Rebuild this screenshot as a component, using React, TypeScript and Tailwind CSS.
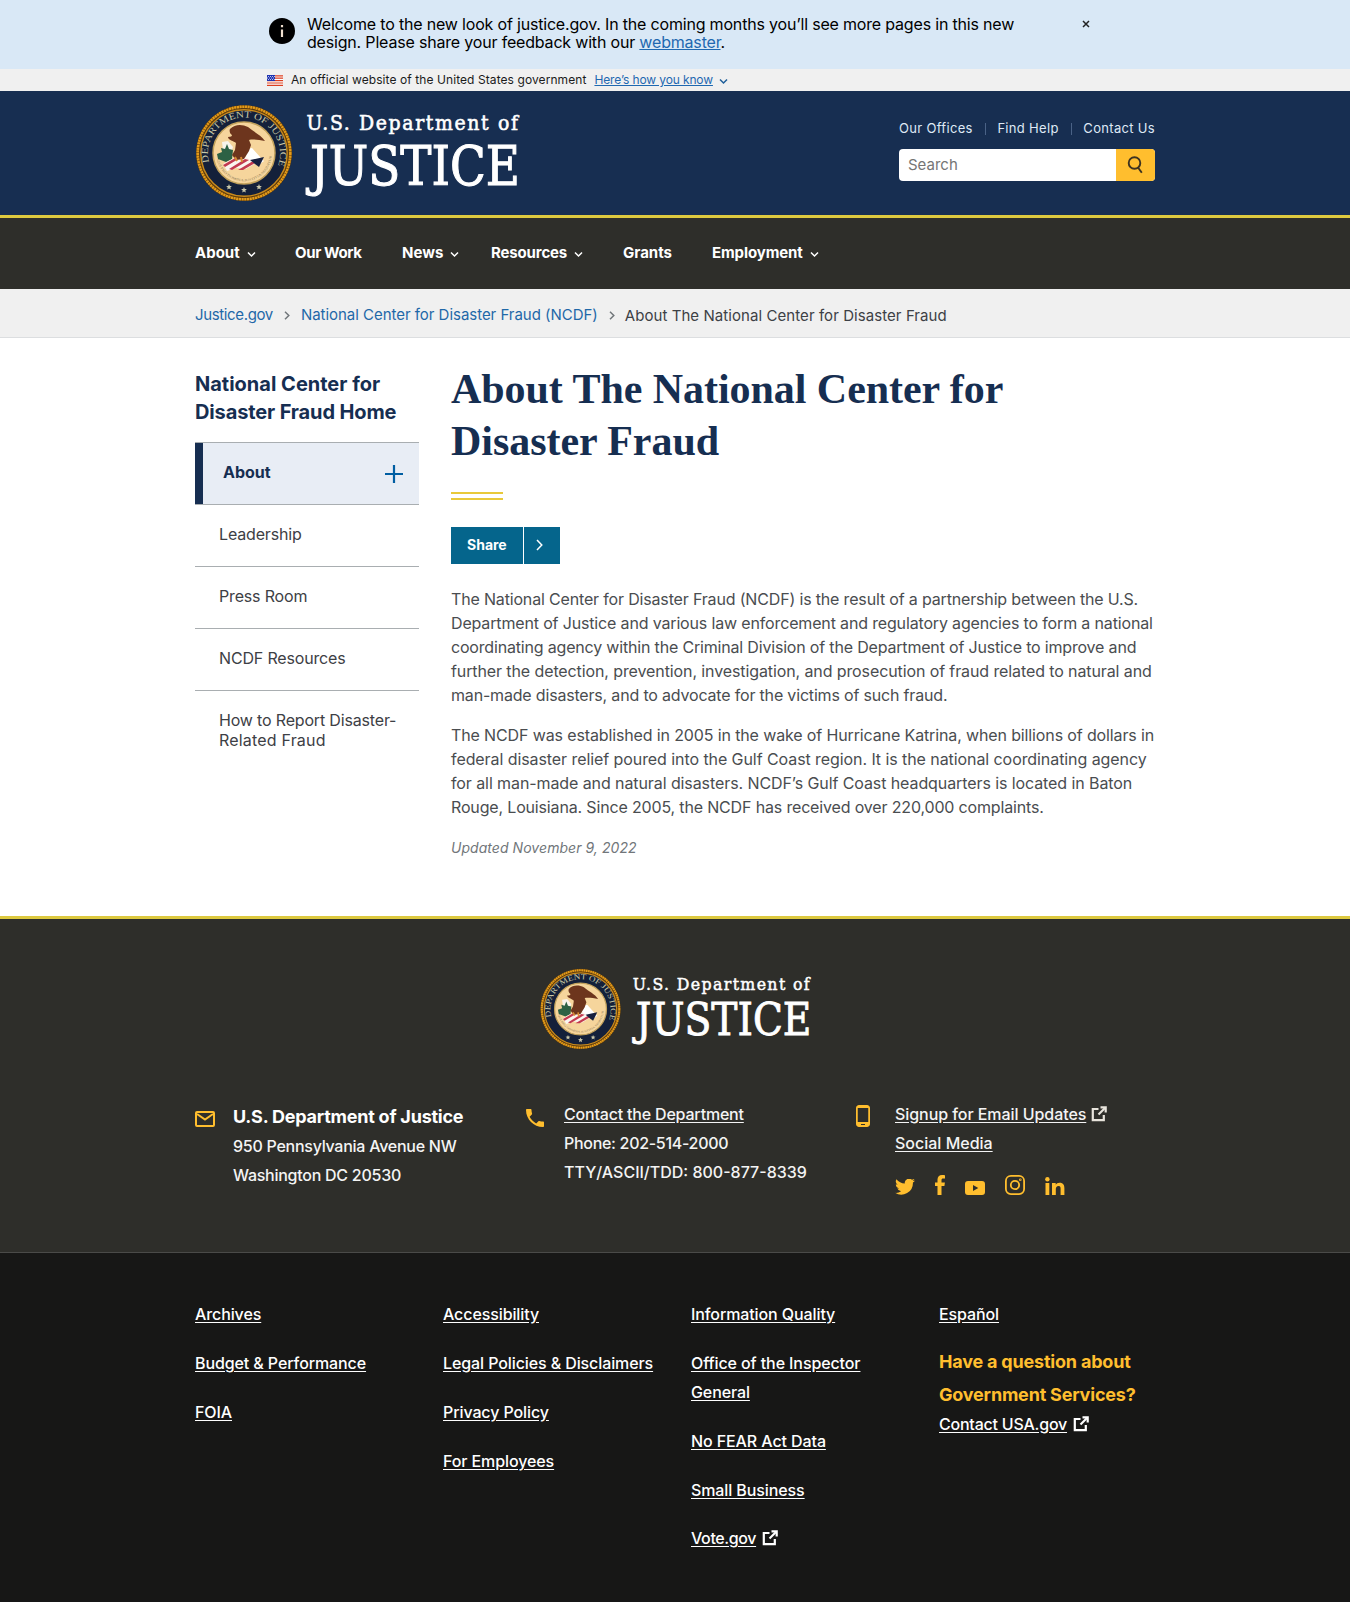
import React from 'react';

const Chevron = ({ className = '', d = 'M1 1.5l3.5 3.5L8 1.5' }: { className?: string; d?: string }) => (
  <svg viewBox="0 0 9 7" className={className} fill="none" stroke="currentColor" strokeWidth="1.5"><path d={d} /></svg>
);

const External = ({ className = '' }: { className?: string }) => (
  <svg viewBox="0 0 16 16" className={className} fill="none" stroke="currentColor" strokeWidth="2.2">
    <path d="M7.500 3H1.800v11.200h11V9" /><path d="M9.500 1.300H14.700v5.200" /><path d="M14 2L7.500 8.500" />
  </svg>
);

const Seal = ({ id }: { id: string }) => (
  <>
    <defs>
      <path id={id} d="M 16.500 65 A 36 36 0 1 1 81.500 65" />
      <path id={id + 'm'} d="M 21.500 52 A 27.600 27.600 0 0 0 76.500 52" />
    </defs>
    <circle cx="49" cy="49" r="48" fill="#5d3b0d" />
    <circle cx="49" cy="49" r="46.300" fill="none" stroke="#e39a18" strokeWidth="2.600" strokeDasharray="2.200 .5" />
    <circle cx="49" cy="49" r="43.200" fill="#14203a" stroke="#c98a1c" strokeWidth="1.400" />
    <circle cx="49" cy="49" r="31" fill="#f6d59c" stroke="#c3a25c" strokeWidth="1.500" />
    <text fontFamily="Liberation Serif, serif" fontSize="9.500" fill="#c9c8a6">
      <textPath href={'#' + id} textLength="134" lengthAdjust="spacingAndGlyphs" startOffset="7">DEPARTMENT OF JUSTICE</textPath>
    </text>
    <text fontFamily="Liberation Serif, serif" fontSize="3.200" fill="#8c7a58">
      <textPath href={'#' + id + 'm'} textLength="78" lengthAdjust="spacingAndGlyphs" startOffset="4">QUI PRO DOMINA JUSTITIA SEQUITUR</textPath>
    </text>
    <g fill="#c9c6a8">
      <path d="M34 80l.8 2 2.100.1-1.600 1.400.5 2.100-1.800-1.200-1.800 1.200.5-2.100-1.600-1.400 2.100-.1z" />
      <path d="M49 83l.8 2 2.100.1-1.600 1.400.5 2.100-1.800-1.200-1.800 1.200.5-2.100-1.600-1.400 2.100-.1z" />
      <path d="M64 80l.8 2 2.100.1-1.600 1.400.5 2.100-1.800-1.200-1.800 1.200.5-2.100-1.600-1.400 2.100-.1z" />
    </g>
    <path d="M27 38l6-1 5 6-2 6-8-3z" fill="#f8f4ec" />
    <path d="M22 50l5-2-1-4 4 1 2-5 2 5 4 1-1 9-6 3-8-3z" fill="#2c6144" />
    <path d="M28 60l13-7h20l5 3-15 9-10-1-9 3z" fill="#faf5ef" />
    <path d="M28 61l14-8 3 1-15 9zM34 65l16-10 4 1-17 10zM43 66l15-9 4 1-14 8z" fill="#c33a50" />
    <path d="M52 45l5-1 9 10 3 3-4 3-7-2-8-6z" fill="#fff" />
    <path d="M55 56l14-3-5 10-4-3z" fill="#17203f" />
    <path d="M35 25c5-5 12-5 18-2 6 5 13 8 17 14-6-1-12-2-16-1l2 5-2 6-5 8-8 1-4-5 3-5 1-7c-2-2-8-3-8-6 3 0 4-1 4-2-2-1-3-4-2-6z" fill="#6d351d" />
    <path d="M40 53l2 4M46 53l1 5" stroke="#d58a32" strokeWidth="2" />
  </>
);

const Logo = ({ className, id }: { className: string; id: string }) => (
  <svg viewBox="0 0 325 98" className={className}>
    <Seal id={id} />
    <g fill="#fff" stroke="#fff" fontFamily="DejaVu Serif, Liberation Serif, serif">
      <text x="111.500" y="26" fontSize="21" strokeWidth=".6" letterSpacing="1.800" textLength="213" lengthAdjust="spacingAndGlyphs">U.S. Department of</text>
      <text x="115" y="80.500" fontSize="54" strokeWidth="1.100" textLength="210" lengthAdjust="spacingAndGlyphs">JUSTICE</text>
    </g>
  </svg>
);

const navItems = [
  { label: 'About', menu: true, cls: 'w-[100px]' },
  { label: 'Our Work', menu: false, cls: 'w-[107px] tracking-[-0.38px]' },
  { label: 'News', menu: true, cls: 'w-[89px]' },
  { label: 'Resources', menu: true, cls: 'w-[132px] tracking-[-0.15px]' },
  { label: 'Grants', menu: false, cls: 'w-[89px]' },
  { label: 'Employment', menu: true, cls: 'tracking-[-0.1px]' },
];

const footerLinks = [
  [['Archives'], ['Budget & Performance'], ['FOIA']],
  [['Accessibility'], ['Legal Policies & Disclaimers'], ['Privacy Policy'], ['For Employees']],
  [['Information Quality'], ['Office of the Inspector', 'General'], ['No FEAR Act Data'], ['Small Business'], ['Vote.gov']],
];

const para1 = [
  ['The National Center for Disaster Fraud (NCDF) is the result of a partnership between the U.S.', 'block tracking-[-0.165px]'],
  ['Department of Justice and various law enforcement and regulatory agencies to form a national', 'block tracking-[-0.155px]'],
  ['coordinating agency within the Criminal Division of the Department of Justice to improve and', 'block tracking-[-0.18px]'],
  ['further the detection, prevention, investigation, and prosecution of fraud related to natural and', 'block tracking-[-0.105px]'],
  ['man-made disasters, and to advocate for the victims of such fraud.', 'block tracking-[-0.18px]'],
];
const para2 = [
  ['The NCDF was established in 2005 in the wake of Hurricane Katrina, when billions of dollars in', 'block tracking-[-0.13px]'],
  ['federal disaster relief poured into the Gulf Coast region. It is the national coordinating agency', 'block tracking-[-0.075px]'],
  ['for all man-made and natural disasters. NCDF’s Gulf Coast headquarters is located in Baton', 'block tracking-[-0.09px]'],
  ['Rouge, Louisiana. Since 2005, the NCDF has received over 220,000 complaints.', 'block tracking-[-0.16px]'],
];

export default function App() {
  return (
    <div className="h-[1602px] w-[1350px] overflow-hidden bg-white font-['Inter','Liberation_Sans',sans-serif] text-base text-[#1b1b1b]">
      <div className="flex h-[69px] bg-[#d9e8f6] pl-[269px] text-black">
        <svg viewBox="0 0 24 24" className="mt-[18px] h-[26px] w-[26px]">
          <circle cx="12" cy="12" r="12" /><path d="M11 6.500h2v2h-2zM11 10.500h2v7h-2z" fill="#f0e0d0" />
        </svg>
        <div className="mt-[15px] ml-3 w-[775px] text-base leading-[18px] tracking-[-0.183px] whitespace-nowrap">
          <p>Welcome to the new look of justice.gov. In the coming months you’ll see more pages in this new</p>
          <p>design. Please share your feedback with our <a className="text-[#1f68b0] underline">webmaster</a>.</p>
        </div>
        <svg viewBox="0 0 8 8" className="mt-5 h-2 w-2" stroke="#222" strokeWidth="1.500"><path d="M1 1l6 6M7 1L1 7" /></svg>
      </div>

      <div className="flex h-[22px] items-center bg-[#f0f0f0] pl-[267px] text-xs whitespace-nowrap">
        <svg viewBox="0 0 16 11" className="mr-2 h-[11px] w-4">
          <rect width="16" height="11" fill="#fff" />
          <path d="M0 .8h16M0 3.200h16M0 5.600h16M0 8h16M0 10.400h16" stroke="#db3e1f" strokeWidth="1.200" />
          <rect width="8" height="6" fill="#1e33b1" />
          <path d="M1 1.500h7M0 3h7M1 4.500h7" stroke="#fff" strokeWidth=".7" strokeDasharray="1 1" />
        </svg>
        <span className="tracking-[0.08px]">An official website of the United States government</span>
        <a className="ml-2 tracking-[-0.12px] text-[#1f68b0] underline">Here’s how you know</a>
        <Chevron className="mt-[3px] ml-[6px] h-[7px] w-[9px] text-[#1f5f9a]" />
      </div>

      <header className="h-[127px] border-b-[3px] border-[#ddc93f] bg-[#172e51]">
        <div className="mx-auto flex w-[960px] justify-between">
          <Logo id="seal-top" className="mt-[13px] h-[98px] w-[325px]" />
          <div className="mt-[28px] w-[256px]">
            <div className="flex h-[20px] items-center justify-between text-[13px] tracking-[0.32px] whitespace-nowrap text-[#dfe9f5]">
              <a>Our Offices</a><i className="h-3 w-px bg-[#4a6286]" /><a>Find Help</a><i className="h-3 w-px bg-[#4a6286]" /><a>Contact Us</a>
            </div>
            <div className="mt-[10px] flex h-8 overflow-hidden rounded bg-white">
              <div className="flex w-[217px] items-center pl-[9px] text-[15px] text-[#757575]">Search</div>
              <div className="flex flex-1 items-center justify-center bg-[#ffbe2e] pr-[2px] pb-px">
                <svg viewBox="0 0 16 18" className="h-[18px] w-4" fill="none" stroke="#3d3320" strokeWidth="1.900"><circle cx="7.500" cy="7" r="5.800" /><path d="M11 11.500l3.800 5.300" /></svg>
              </div>
            </div>
          </div>
        </div>
      </header>

      <nav className="h-[71px] bg-[#2e2e2a] text-white">
        <div className="mx-auto flex w-[960px] pt-[25px] text-[15px] leading-5 font-bold whitespace-nowrap">
          {navItems.map((n) => (
            <a key={n.label} className={'flex items-center ' + n.cls}>
              {n.label}
              {n.menu && <Chevron className="mt-[3px] ml-[7px] h-[7px] w-[9px]" />}
            </a>
          ))}
        </div>
      </nav>

      <div className="h-[49px] border-b border-[#dcdee0] bg-[#f0f0f0]">
        <div className="mx-auto flex h-[52px] w-[960px] items-center text-[15px] whitespace-nowrap">
          <a className="tracking-[-0.36px] text-[#1f68a8]">Justice.gov</a>
          <svg viewBox="0 0 6 9" className="mx-[11px] h-[9px] w-[6px]" fill="none" stroke="#71767a" strokeWidth="1.500"><path d="M1 .8l3.800 3.700L1 8.200" /></svg>
          <a className="tracking-[-0.03px] text-[#1f68a8]">National Center for Disaster Fraud (NCDF)</a>
          <svg viewBox="0 0 6 9" className="mr-[10px] ml-[11px] h-[9px] w-[6px]" fill="none" stroke="#71767a" strokeWidth="1.500"><path d="M1 .8l3.800 3.700L1 8.200" /></svg>
          <span className="pt-0.5 tracking-[0.07px] text-[#3d4045]">About The National Center for Disaster Fraud</span>
        </div>
      </div>

      <main className="mx-auto flex h-[578px] w-[960px] gap-8">
        <aside className="w-[224px] pt-8">
          <h2 className="text-xl leading-7 font-bold whitespace-nowrap text-[#162e51]">National Center for<br /><span className="tracking-[-0.13px]">Disaster Fraud Home</span></h2>
          <ul className="mt-4 text-base leading-5 tracking-[-0.17px] whitespace-nowrap">
            <li className="flex h-[62px] border-t border-[#a9aeb1] bg-[#e8edf5] font-bold tracking-normal text-[#162e51]">
              <i className="w-2 bg-[#162e51]" />
              <span className="w-[162px] pt-[19px] pl-5">About</span>
              <svg viewBox="0 0 18 18" className="mt-[22px] ml-5 h-[18px] w-[18px]" stroke="#005ea2" strokeWidth="2.200"><path d="M9 0v18M0 9h18" /></svg>
            </li>
            {['Leadership', 'Press Room', 'NCDF Resources'].map((t) => (
              <li key={t} className="h-[62px] border-t border-[#a9aeb1] pt-[19px] pl-6 text-[#3d4045]">{t}</li>
            ))}
            <li className="border-t border-[#a9aeb1] pt-[19px] pl-6 text-[#3d4045]">How to Report Disaster-<br /><span className="tracking-[0.19px]">Related Fraud</span></li>
          </ul>
        </aside>
        <section className="w-[704px]">
          <h1 className="pt-[25px] font-['Liberation_Serif',serif] text-[42px] leading-[52px] font-bold tracking-[-0.05px] whitespace-nowrap text-[#162e51]">About The National Center for<br />Disaster Fraud</h1>
          <div className="mt-[25px] h-2 w-[52px] border-y-2 border-[#e8c93a]" />
          <a className="mt-[27px] flex h-[37px] w-[109px] bg-[#05658c] text-sm font-bold text-white">
            <span className="flex w-[73px] items-center border-r border-white pb-px pl-4">Share</span>
            <svg viewBox="0 0 7 12" className="mt-3 ml-3 h-3 w-[7px]" fill="none" stroke="currentColor" strokeWidth="1.500"><path d="M1 1l4.800 5L1 11" /></svg>
          </a>
          <p className="mt-[23px] text-base leading-6 whitespace-nowrap text-[#4a4d50]">{para1.map(([l, c]) => <span key={l} className={c}>{l}</span>)}</p>
          <p className="mt-4 text-base leading-6 whitespace-nowrap text-[#4a4d50]">{para2.map(([l, c]) => <span key={l} className={c}>{l}</span>)}</p>
          <p className="mt-[19px] text-sm tracking-[0.05px] text-[#71767a] italic">Updated November 9, 2022</p>
        </section>
      </main>

      <footer className="h-[337px] border-t-[3px] border-b border-t-[#ddc93f] border-b-[#4a4a48] bg-[#2e2e2a] text-[#f4f4f4]">
        <Logo id="seal-bottom" className="mt-[49px] ml-[539px] h-[82px] w-[273px]" />
        <div className="mx-auto mt-[50px] flex w-[960px] text-base leading-[29px] font-medium whitespace-nowrap">
          <div className="flex w-[331px]">
            <svg viewBox="0 0 20 16" className="mt-[11px] mr-[18px] h-4 w-5" fill="none" stroke="#ffbe2e" strokeWidth="2"><rect x="1" y="1" width="18" height="14" rx="1" /><path d="M2 3l8 5.500L18 3" /></svg>
            <div className="pt-0.5 tracking-[-0.26px]"><b className="block text-lg leading-[30px] tracking-[-0.23px] text-white">U.S. Department of Justice</b><p>950 Pennsylvania Avenue NW</p><p>Washington DC 20530</p></div>
          </div>
          <div className="flex w-[331px]">
            <svg viewBox="3 3 18 18" className="mt-[9px] mr-5 h-[18px] w-[18px]" fill="#ffbe2e"><path d="M6.620 10.790c1.440 2.830 3.760 5.140 6.590 6.590l2.200-2.200c.27-.27.67-.36 1.020-.24 1.120.37 2.330.57 3.570.57.550 0 1 .45 1 1V20c0 .55-.45 1-1 1-9.390 0-17-7.610-17-17 0-.55.45-1 1-1h3.500c.55 0 1 .45 1 1 0 1.250.2 2.450.57 3.570.11.35.03.74-.25 1.020l-2.200 2.200z" /></svg>
            <div><a className="tracking-[-0.19px] underline underline-offset-2">Contact the Department</a><p className="tracking-[-0.3px]">Phone: 202-514-2000</p><p>TTY/ASCII/TDD: 800-877-8339</p></div>
          </div>
          <div className="flex -ml-px">
            <svg viewBox="5 1 14 22" className="mt-[5px] mr-[25px] h-[22px] w-[14px]" fill="#ffbe2e"><path d="M16 1H8C6.340 1 5 2.340 5 4v16c0 1.660 1.340 3 3 3h8c1.660 0 3-1.340 3-3V4c0-1.660-1.340-3-3-3zm-2 20h-4v-1h4v1zm3.250-3H6.750V4h10.500v14z" /></svg>
            <div>
              <div className="flex"><a className="tracking-[-0.06px] underline underline-offset-2">Signup for Email Updates</a><External className="mt-[6px] ml-[5px] h-4 w-4 text-[#e8e4dc]" /></div>
              <a className="block underline underline-offset-2">Social Media</a>
              <div className="mt-[15px] flex h-[22px] items-end gap-5 text-[#ffbe2e]">
                <svg viewBox="0 3 24 19" className="h-4 w-5" fill="currentColor"><path d="M24 4.600a10 10 0 0 1-2.800.8 5 5 0 0 0 2.100-2.700 10 10 0 0 1-3.100 1.200 5 5 0 0 0-8.400 4.500A14 14 0 0 1 1.700 3.200a5 5 0 0 0 1.500 6.500 5 5 0 0 1-2.200-.6 5 5 0 0 0 4 4.900 5 5 0 0 1-2.300.1 5 5 0 0 0 4.600 3.400A10 10 0 0 1 0 19.500 14 14 0 0 0 21.500 7.100 10 10 0 0 0 24 4.600z" /></svg>
                <svg viewBox="0 0 10 20" className="h-5 w-[10px]" fill="currentColor"><path d="M2.500 20V11H0V7.400h2.500V4.600C2.500 1.700 4.200 0 7 0c1.200 0 2.400.1 3 .2v3.200H8.300C6.900 3.400 6.500 4 6.500 5v2.400H9.900L9.400 11H6.500v9z" /></svg>
                <svg viewBox="0 0 20 14" className="h-[14px] w-5" fill="currentColor"><path fillRule="evenodd" d="M3 0h14a3 3 0 0 1 3 3v8a3 3 0 0 1-3 3H3a3 3 0 0 1-3-3V3a3 3 0 0 1 3-3zm5 4v6l5.300-3z" /></svg>
                <svg viewBox="0 0 20 20" className="h-5 w-5" fill="none" stroke="currentColor" strokeWidth="1.800"><rect x=".9" y=".9" width="18.200" height="18.200" rx="5" /><circle cx="10" cy="10" r="4.200" /><circle cx="15.300" cy="4.700" r=".4" /></svg>
                <svg viewBox="0 0 20 18" className="h-[18px] w-5" fill="currentColor"><circle cx="2.400" cy="2.200" r="2.200" /><path d="M.5 6h3.800v12H.5zM7 6h3.700v1.700C11.400 6.500 12.700 5.700 14.500 5.700c4 0 4.900 2.500 4.900 5.900V18h-3.800v-5.700c0-1.500 0-3.200-2-3.200s-2.800 1.600-2.800 3.200V18H7z" /></svg>
              </div>
            </div>
          </div>
        </div>
      </footer>

      <div className="h-[349px] bg-[#171716] text-base leading-[29px] font-medium tracking-[-0.1px] whitespace-nowrap text-white">
        <div className="mx-auto flex w-[992px] pt-[47px] pl-4">
          {footerLinks.map((col, i) => (
            <ul key={i} className="flex w-[248px] flex-col gap-5">
              {col.map((lines) => (
                <li key={lines[0]} className={lines[0] === 'Vote.gov' ? '-mt-px flex tracking-[-0.38px]' : 'flex'}>
                  <a>{lines.map((l) => <span key={l} className="block underline underline-offset-2">{l}</span>)}</a>
                  {lines[0] === 'Vote.gov' && <External className="mt-[6px] ml-1.5 h-4 w-4" />}
                </li>
              ))}
            </ul>
          ))}
          <div>
            <a className="underline underline-offset-2">Español</a>
            <h3 className="mt-4 text-lg leading-[33px] font-bold tracking-[-0.2px] text-[#ffbe2e]">Have a question about<br />Government Services?</h3>
            <div className="-mt-px flex"><a className="tracking-[-0.22px] underline underline-offset-2">Contact USA.gov</a><External className="mt-[6px] ml-1.5 h-4 w-4" /></div>
          </div>
        </div>
      </div>
    </div>
  );
}
